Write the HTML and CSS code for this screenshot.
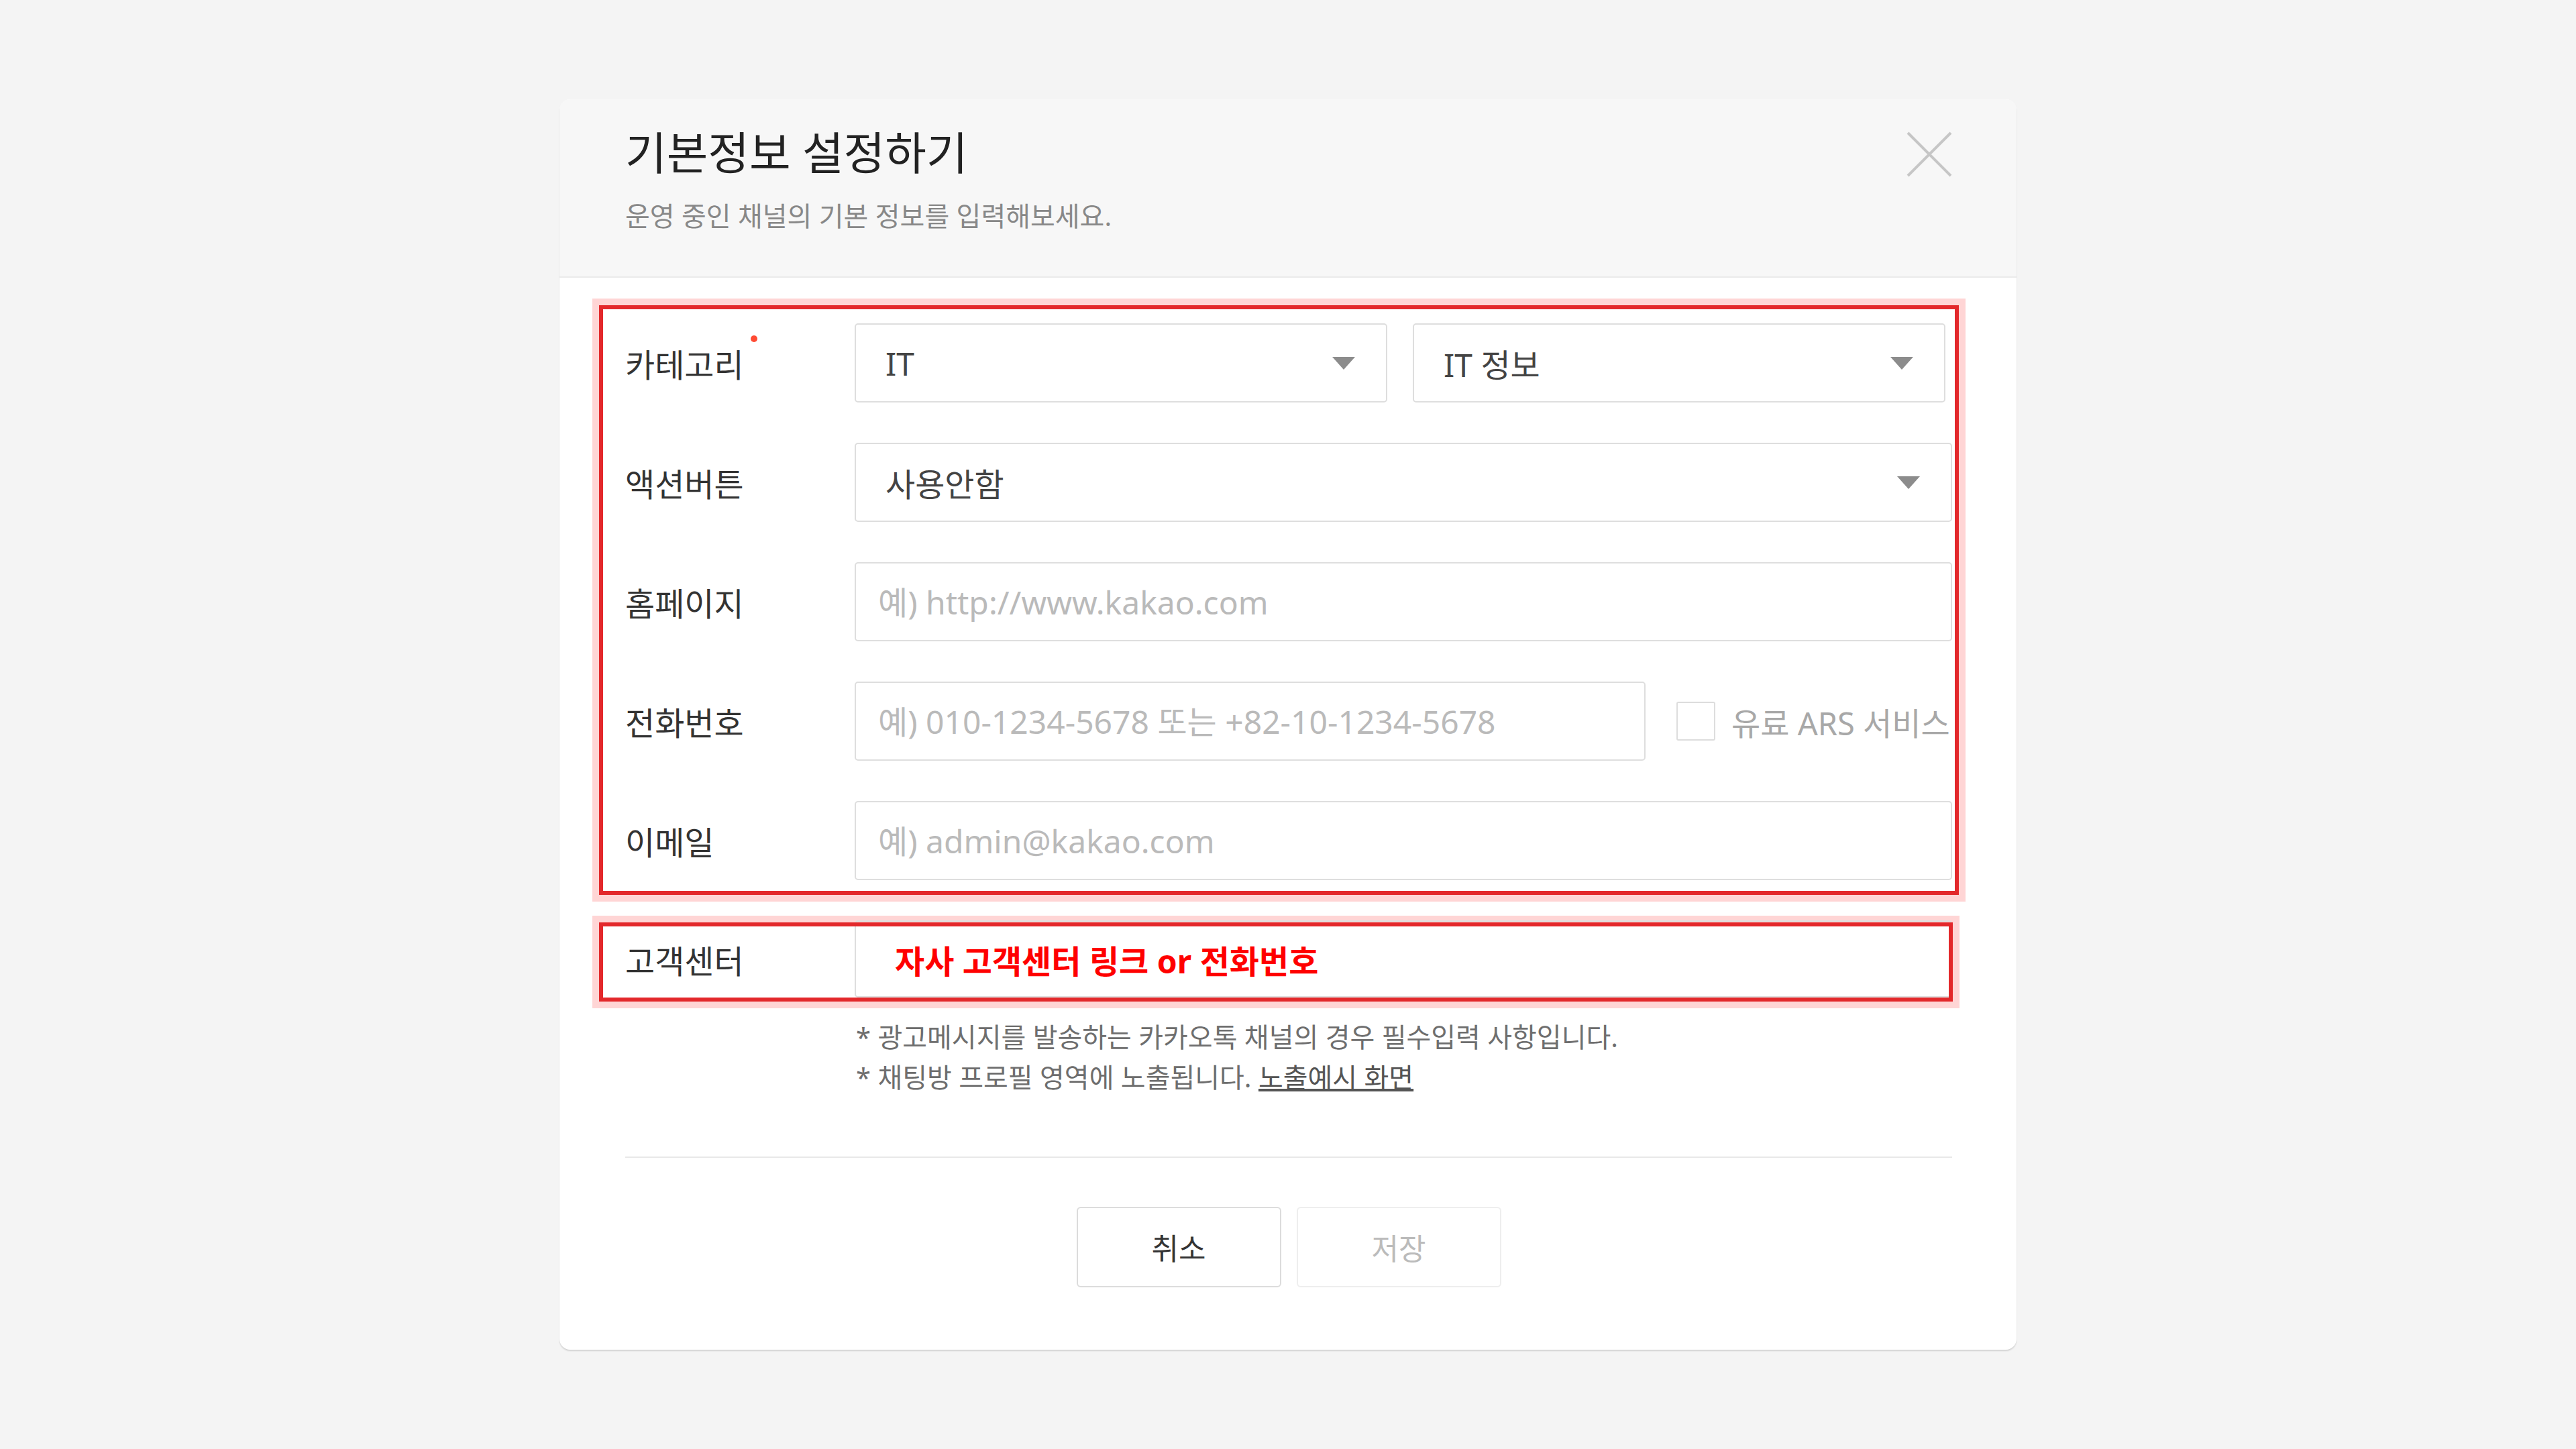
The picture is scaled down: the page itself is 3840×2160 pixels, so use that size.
FILE: index.html
```
<!DOCTYPE html>
<html lang="ko">

<head>
    <meta charset="UTF-8">
    <meta name="viewport" content="width=device-width, initial-scale=1.0">
    <title>기본정보 설정하기</title>
    <link rel="stylesheet" href="styles.css">
</head>

<body>
    <div class="modal">
        <div class="modal-header">
            <div>
                <h1 class="modal-title">기본정보 설정하기</h1>
                <p class="modal-desc">운영 중인 채널의 기본 정보를 입력해보세요.</p>
            </div>
            <button class="btn-close" type="button">
                <svg width="68" height="68" viewBox="0 0 68 68">
                    <path d="M2 2L66 66M66 2L2 66" stroke="#c6c6c6" stroke-width="4" fill="none" />
                </svg>
            </button>
        </div>

        <div class="modal-body">
            <div class="mark mark-main">
                <div class="row">
                    <div class="row-label">카테고리<span class="req"></span></div>
                    <div class="field-pair">
                        <div class="select">
                            <span>IT</span>
                            <svg width="34" height="19" viewBox="0 0 34 19"><polygon points="0,0 34,0 17,19" fill="#8c8c8c" /></svg>
                        </div>
                        <div class="select">
                            <span>IT 정보</span>
                            <svg width="34" height="19" viewBox="0 0 34 19"><polygon points="0,0 34,0 17,19" fill="#8c8c8c" /></svg>
                        </div>
                    </div>
                </div>

                <div class="row">
                    <div class="row-label">액션버튼</div>
                    <div class="select">
                        <span>사용안함</span>
                        <svg width="34" height="19" viewBox="0 0 34 19"><polygon points="0,0 34,0 17,19" fill="#8c8c8c" /></svg>
                    </div>
                </div>

                <div class="row">
                    <div class="row-label">홈페이지</div>
                    <input class="text-input" type="text" placeholder="예) http://www.kakao.com">
                </div>

                <div class="row">
                    <div class="row-label">전화번호</div>
                    <div class="phone-field">
                        <input class="text-input phone-input" type="text" placeholder="예) 010-1234-5678 또는 +82-10-1234-5678">
                        <label class="check">
                            <input type="checkbox">
                            유료 ARS 서비스
                        </label>
                    </div>
                </div>

                <div class="row">
                    <div class="row-label">이메일</div>
                    <input class="text-input" type="text" placeholder="예) admin@kakao.com">
                </div>
            </div>

            <div class="mark mark-cs">
                <div class="row row-cs">
                    <div class="row-label">고객센터</div>
                    <div class="cs-box">자사 고객센터 링크 or 전화번호</div>
                </div>
            </div>

            <ul class="notes">
                <li>* 광고메시지를 발송하는 카카오톡 채널의 경우 필수입력 사항입니다.</li>
                <li>* 채팅방 프로필 영역에 노출됩니다. <a href="#">노출예시 화면</a></li>
            </ul>

            <div class="modal-footer">
                <button class="btn" type="button">취소</button>
                <button class="btn btn-disabled" type="button">저장</button>
            </div>
        </div>
    </div>
</body>

</html>
```

FILE: styles.css
```
body {
    margin: 0;
    height: 100vh;
    display: flex;
    justify-content: center;
    align-items: center;
    background-color: #f4f4f4;
    font-family: "Noto Sans", "Noto Sans CJK KR", sans-serif;
    color: #333333;
}

.modal {
    width: 2172px;
    background: #ffffff;
    border-radius: 16px;
    box-shadow: 0 2px 2px rgba(0, 0, 0, 0.14);
}

.modal-header {
    display: flex;
    justify-content: space-between;
    align-items: flex-start;
    padding: 33px 96px 62px 98px;
    background: #f7f7f7;
    border-bottom: 2px solid #ebebeb;
    border-radius: 16px 16px 0 0;
}

.modal-title {
    margin: 0;
    font-size: 67px;
    line-height: 92px;
    font-weight: 400;
    color: #222222;
}

.modal-desc {
    margin: 20px 0 0;
    font-size: 40px;
    line-height: 57px;
    color: #888888;
}

.btn-close {
    margin-top: 15px;
    padding: 0;
    border: none;
    background: none;
    display: flex;
    cursor: pointer;
}

.modal-body {
    padding: 47px 96px 93px 98px;
}

/* red annotation frames */
.mark {
    outline: 6px solid #e3282b;
    box-shadow: 0 0 0 16px #ffd5d5;
}

.mark-main {
    display: flex;
    flex-direction: column;
    gap: 60px;
    margin: 0 -4px 0 -33px;
    padding: 21px 4px 16px 33px;
}

.mark-cs {
    display: flex;
    height: 106px;
    margin: 53px 5px 0 -33px;
    padding-left: 33px;
}

.row {
    display: grid;
    grid-template-columns: 342px 1fr;
    align-items: center;
    height: 118px;
}

.row-label {
    font-size: 48px;
    color: #333333;
}

.req {
    display: inline-block;
    width: 10px;
    height: 10px;
    margin: -6px 0 0 10px;
    border-radius: 50%;
    background: #ff4a33;
    vertical-align: top;
}

.field-pair {
    display: grid;
    grid-template-columns: 794px 794px;
    gap: 38px;
    height: 100%;
}

.select {
    display: flex;
    align-items: center;
    justify-content: space-between;
    box-sizing: border-box;
    height: 118px;
    padding: 0 46px 0 44px;
    border: 2px solid #dedede;
    border-radius: 5px;
    font-size: 48px;
    color: #444444;
}

.text-input {
    box-sizing: border-box;
    width: 100%;
    height: 118px;
    padding: 0 20px 0 33px;
    border: 2px solid #dedede;
    border-radius: 5px;
    font-family: inherit;
    font-size: 48px;
    color: #444444;
    outline: none;
}

.text-input::placeholder {
    color: #bababa;
}

.phone-field {
    display: flex;
    align-items: center;
}

.phone-input {
    flex: 0 0 1179px;
}

.check {
    display: flex;
    align-items: center;
    gap: 24px;
    margin-left: 46px;
    font-size: 47px;
    color: #a8a8a8;
    white-space: nowrap;
}

.check input {
    appearance: none;
    width: 58px;
    height: 58px;
    margin: 0;
    border: 2px solid #dddddd;
    border-radius: 3px;
    background: #ffffff;
}

.row-cs {
    flex: 1;
    height: 115px;
    margin: -9px -5px 0 0;
}

.cs-box {
    display: flex;
    align-items: center;
    box-sizing: border-box;
    height: 115px;
    padding-left: 58px;
    border: 2px solid #dedede;
    border-radius: 5px;
    font-size: 48px;
    font-weight: bold;
    color: #ff0000;
}

.notes {
    list-style: none;
    margin: 29px 0 0;
    padding: 0 0 0 344px;
    font-size: 40px;
    line-height: 60px;
    color: #6e6e6e;
}

.notes a {
    color: #555555;
}

.modal-footer {
    display: flex;
    justify-content: center;
    gap: 23px;
    margin-top: 88px;
    padding-top: 73px;
    border-top: 2px solid #e8e8e8;
}

.btn {
    width: 305px;
    height: 120px;
    border: 2px solid #dcdcdc;
    border-radius: 6px;
    background: #ffffff;
    font-family: inherit;
    font-size: 44px;
    color: #333333;
    cursor: pointer;
}

.btn-disabled {
    border-color: #eeeeee;
    color: #bbbbbb;
}
```
